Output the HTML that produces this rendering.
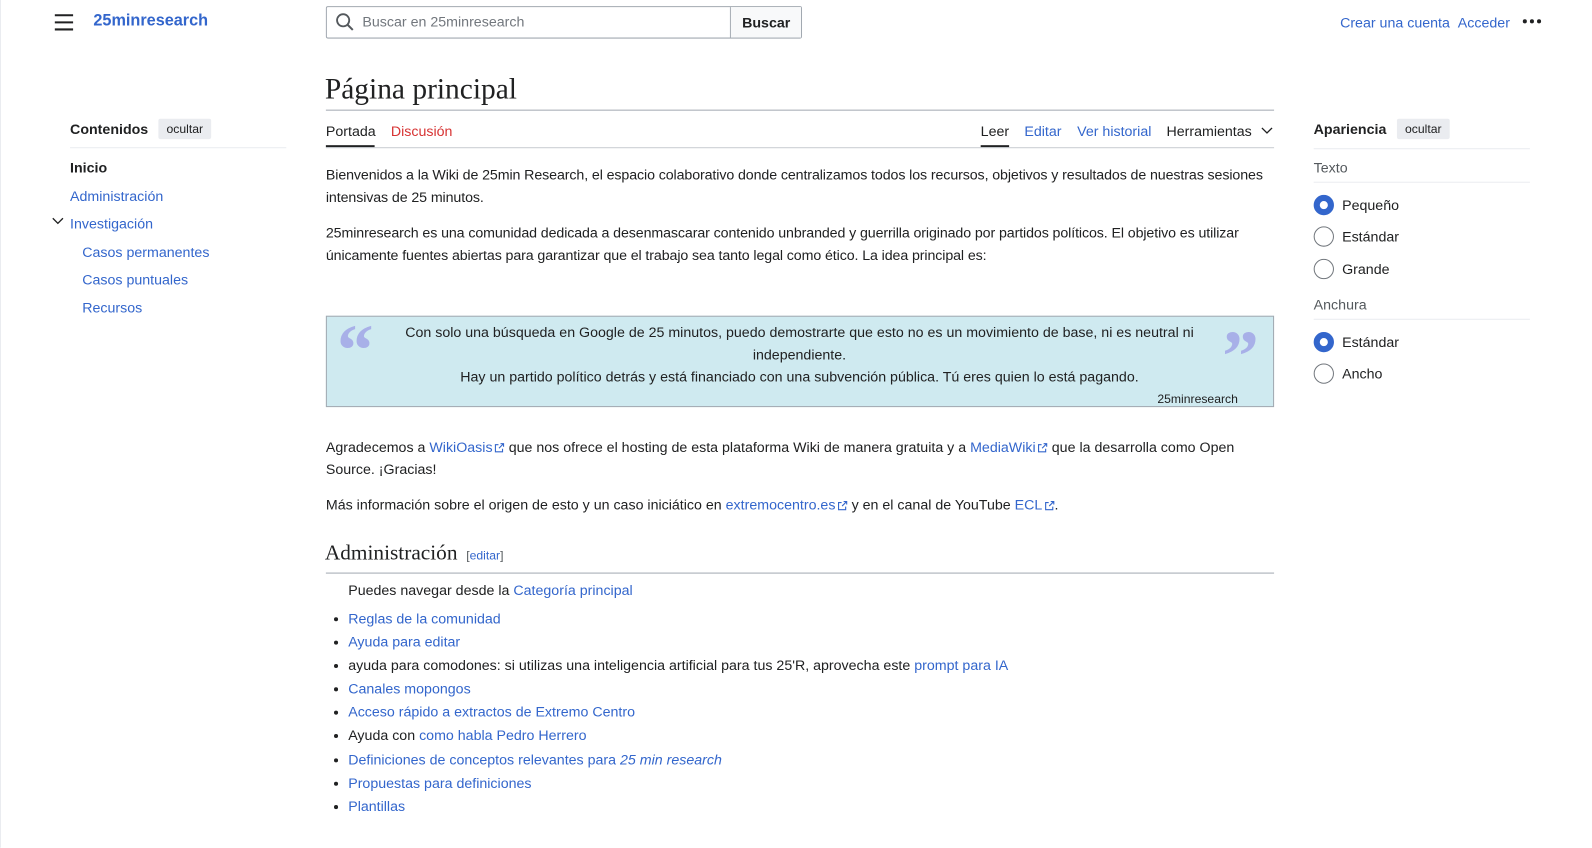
<!DOCTYPE html>
<html><head><meta charset="utf-8"><style>
*{box-sizing:border-box;margin:0;padding:0}
html,body{width:1592px;height:835px;overflow:hidden;background:#fff}
body{font-family:"Liberation Sans",sans-serif;font-size:14px;color:#202122}
#w{position:absolute;left:0;top:0;width:1568px;height:822px;transform:scale(1.0152);transform-origin:0 0}
a{color:#3366cc;text-decoration:none}
.a{position:absolute;white-space:nowrap}
.red{color:#d73333}
.ext{display:inline-block;width:10px;height:10px;margin-left:2px;vertical-align:-1px}
.radio{position:absolute;width:20px;height:20px;border-radius:50%;border:1px solid #72777d}
.radio.on{border:6px solid #3366cc}
.btn{background:#eaecf0;border-radius:2px;font-size:12px;padding:3px 8px}
p{line-height:22px}
ul{position:absolute;left:321px;top:598px;list-style:none}
ul li{line-height:23.1px;padding-left:22px;position:relative}
ul li::before{content:"";position:absolute;left:8px;top:10px;width:4px;height:4px;border-radius:50%;background:#202122}
</style></head><body><div id="w">
<div class="a" style="left:0;top:0;width:1px;height:835px;background:#eaecf0"></div>
<svg class="a" style="left:53px;top:13px" width="20" height="18"><path d="M1 2h18M1 9h18M1 16h18" stroke="#202122" stroke-width="2"/></svg>
<div class="a" style="left:92px;top:12px;font-size:16px;font-weight:bold;color:#3366cc">25minresearch</div>
<div class="a" style="left:321px;top:6px;width:469px;height:32px;border:1px solid #a2a9b1;border-radius:2px"></div>
<div class="a" style="left:719px;top:7px;width:1px;height:30px;background:#a2a9b1"></div>
<div class="a" style="left:720px;top:7px;width:69px;height:30px;background:#f8f9fa"></div>
<svg class="a" style="left:330px;top:12px" width="20" height="20"><circle cx="8" cy="8" r="6" fill="none" stroke="#54595d" stroke-width="1.8"/><path d="M12.5 12.5l5 5" stroke="#54595d" stroke-width="2"/></svg>
<div class="a" style="left:357px;top:13px;color:#72777d">Buscar en 25minresearch</div>
<div class="a" style="left:731px;top:14px;font-weight:bold">Buscar</div>
<div class="a" style="left:1320px;top:14px"><a>Crear una cuenta</a>&nbsp;&nbsp;<a>Acceder</a></div>
<svg class="a" style="left:1499px;top:18px" width="20" height="6"><circle cx="3" cy="3" r="2" fill="#202122"/><circle cx="10" cy="3" r="2" fill="#202122"/><circle cx="17" cy="3" r="2" fill="#202122"/></svg>
<div class="a" style="left:69px;top:119px;font-weight:bold">Contenidos</div>
<div class="a btn" style="left:156px;top:117px">ocultar</div>
<div class="a" style="left:69px;top:145px;width:213px;height:1px;background:#eaecf0"></div>
<div class="a" style="left:69px;top:157px;font-weight:bold">Inicio</div>
<div class="a" style="left:69px;top:185px"><a>Administración</a></div>
<svg class="a" style="left:51px;top:213px" width="12" height="10"><path d="M1 2l5 5 5-5" stroke="#202122" fill="none" stroke-width="1.3"/></svg>
<div class="a" style="left:69px;top:212px"><a>Investigación</a></div>
<div class="a" style="left:81px;top:240px"><a>Casos permanentes</a></div>
<div class="a" style="left:81px;top:267px"><a>Casos puntuales</a></div>
<div class="a" style="left:81px;top:295px"><a>Recursos</a></div>
<div class="a" style="left:320px;top:72px;font-family:'Liberation Serif',serif;font-size:29px">Página principal</div>
<div class="a" style="left:321px;top:108px;width:934px;height:1px;background:#a2a9b1"></div>
<div class="a" style="left:321px;top:121px">Portada</div>
<div class="a" style="left:321px;top:143px;width:48px;height:2px;background:#202122"></div>
<div class="a red" style="left:385px;top:121px">Discusión</div>
<div class="a" style="left:966px;top:121px">Leer</div>
<div class="a" style="left:966px;top:143px;width:28px;height:2px;background:#202122"></div>
<div class="a" style="left:1009px;top:121px"><a>Editar</a></div>
<div class="a" style="left:1061px;top:121px"><a>Ver historial</a></div>
<div class="a" style="left:1149px;top:121px">Herramientas</div>
<svg class="a" style="left:1242px;top:124px" width="12" height="10"><path d="M1 2l5 5 5-5" stroke="#202122" fill="none" stroke-width="1.3"/></svg>
<div class="a" style="left:321px;top:145px;width:934px;height:1px;background:#c8ccd1"></div>
<div class="a" style="left:321px;top:161px;width:934px;white-space:normal;letter-spacing:-0.1px">
<p>Bienvenidos a la Wiki de 25min Research, el espacio colaborativo donde centralizamos todos los recursos, objetivos y resultados de nuestras sesiones intensivas de 25 minutos.</p>
<p style="margin-top:13px">25minresearch es una comunidad dedicada a desenmascarar contenido unbranded y guerrilla originado por partidos políticos. El objetivo es utilizar únicamente fuentes abiertas para garantizar que el trabajo sea tanto legal como ético. La idea principal es:</p>
</div>
<div class="a" style="left:321px;top:311px;width:934px;height:90px;background:#cfeaf0;border:1px solid #a2a9b1"></div>
<div class="a" style="left:332px;top:305px;font-family:'Liberation Serif',serif;font-size:72px;font-weight:bold;color:#a8b0e8;line-height:80px">“</div>
<div class="a" style="left:1204px;top:311px;font-family:'Liberation Serif',serif;font-size:72px;font-weight:bold;color:#a8b0e8;line-height:80px">”</div>
<div class="a" style="left:390px;top:316px;width:795px;white-space:normal;text-align:center;line-height:22px">Con solo una búsqueda en Google de 25 minutos, puedo demostrarte que esto no es un movimiento de base, ni es neutral ni independiente.<br>Hay un partido político detrás y está financiado con una subvención pública. Tú eres quien lo está pagando.</div>
<div class="a" style="left:1140px;top:386px;font-size:12px">25minresearch</div>
<div class="a" style="left:321px;top:429px;width:934px;white-space:normal">
<p>Agradecemos a <a>WikiOasis<svg class="ext" viewBox="0 0 10 10"><path d="M8 6v3H1V2h3M6 1h3v3M9 1L4.5 5.5" stroke="#3366cc" fill="none" stroke-width="1.1"/></svg></a> que nos ofrece el hosting de esta plataforma Wiki de manera gratuita y a <a>MediaWiki<svg class="ext" viewBox="0 0 10 10"><path d="M8 6v3H1V2h3M6 1h3v3M9 1L4.5 5.5" stroke="#3366cc" fill="none" stroke-width="1.1"/></svg></a> que la desarrolla como Open Source. ¡Gracias!</p>
<p style="margin-top:13px">Más información sobre el origen de esto y un caso iniciático en <a>extremocentro.es<svg class="ext" viewBox="0 0 10 10"><path d="M8 6v3H1V2h3M6 1h3v3M9 1L4.5 5.5" stroke="#3366cc" fill="none" stroke-width="1.1"/></svg></a> y en el canal de YouTube <a>ECL<svg class="ext" viewBox="0 0 10 10"><path d="M8 6v3H1V2h3M6 1h3v3M9 1L4.5 5.5" stroke="#3366cc" fill="none" stroke-width="1.1"/></svg></a>.</p>
</div>
<div class="a" style="left:320px;top:532px;font-family:'Liberation Serif',serif;font-size:21px">Administración <span style="font-family:'Liberation Sans',sans-serif;font-size:12px;color:#54595d">&nbsp;[<a>editar</a>]</span></div>
<div class="a" style="left:321px;top:564px;width:934px;height:1px;background:#a2a9b1"></div>
<div class="a" style="left:343px;top:573px">Puedes navegar desde la <a>Categoría principal</a></div>
<ul>
<li><a>Reglas de la comunidad</a></li>
<li><a>Ayuda para editar</a></li>
<li>ayuda para comodones: si utilizas una inteligencia artificial para tus 25'R, aprovecha este <a>prompt para IA</a></li>
<li><a>Canales mopongos</a></li>
<li><a>Acceso rápido a extractos de Extremo Centro</a></li>
<li>Ayuda con <a>como habla Pedro Herrero</a></li>
<li><a>Definiciones de conceptos relevantes para <i>25 min research</i></a></li>
<li><a>Propuestas para definiciones</a></li>
<li><a>Plantillas</a></li>
</ul>
<div class="a" style="left:1294px;top:119px;font-weight:bold">Apariencia</div>
<div class="a btn" style="left:1376px;top:117px">ocultar</div>
<div class="a" style="left:1294px;top:146px;width:213px;height:1px;background:#eaecf0"></div>
<div class="a" style="left:1294px;top:157px;color:#54595d">Texto</div>
<div class="a" style="left:1294px;top:179px;width:213px;height:1px;background:#eaecf0"></div>
<div class="radio on" style="left:1294px;top:192px"></div><div class="a" style="left:1322px;top:194px">Pequeño</div>
<div class="radio" style="left:1294px;top:223px"></div><div class="a" style="left:1322px;top:225px">Estándar</div>
<div class="radio" style="left:1294px;top:255px"></div><div class="a" style="left:1322px;top:257px">Grande</div>
<div class="a" style="left:1294px;top:292px;color:#54595d">Anchura</div>
<div class="a" style="left:1294px;top:314px;width:213px;height:1px;background:#eaecf0"></div>
<div class="radio on" style="left:1294px;top:327px"></div><div class="a" style="left:1322px;top:329px">Estándar</div>
<div class="radio" style="left:1294px;top:358px"></div><div class="a" style="left:1322px;top:360px">Ancho</div>
</div></body></html>
